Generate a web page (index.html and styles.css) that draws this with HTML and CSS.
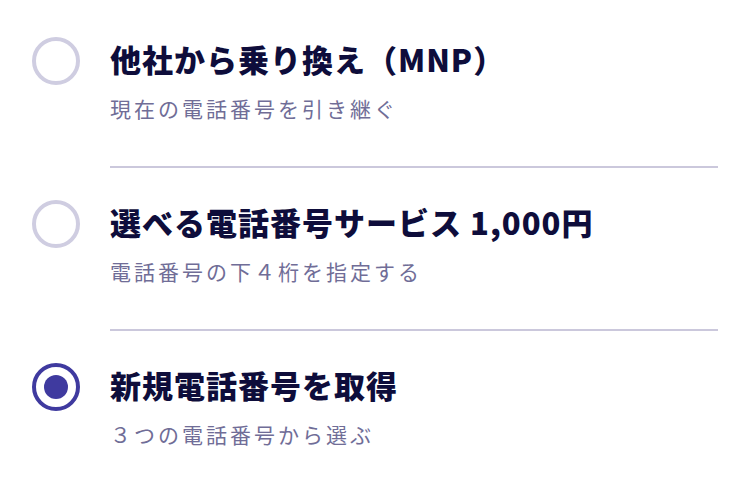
FILE: index.html
```html
<!DOCTYPE html>
<html lang="ja">
<head>
    <meta charset="UTF-8">
    <meta name="viewport" content="width=device-width, initial-scale=1.0">
    <title>電話番号の選択</title>
    <link rel="stylesheet" href="styles.css">
</head>
<body>
    <main class="choices">
        <label class="choice">
            <span class="radio"></span>
            <div class="choice-body">
                <div class="choice-title">他社から乗り換え（MNP）</div>
                <div class="choice-note">現在の電話番号を引き継ぐ</div>
            </div>
        </label>
        <label class="choice">
            <span class="radio"></span>
            <div class="choice-body">
                <div class="choice-title">選べる電話番号サービス 1,000円</div>
                <div class="choice-note">電話番号の下４桁を指定する</div>
            </div>
        </label>
        <label class="choice">
            <span class="radio checked"></span>
            <div class="choice-body">
                <div class="choice-title">新規電話番号を取得</div>
                <div class="choice-note">３つの電話番号から選ぶ</div>
            </div>
        </label>
    </main>
</body>
</html>
```

FILE: styles.css
```css
body {
    margin: 0;
    padding: 0;
    background-color: #fff;
    font-family: "Noto Sans CJK JP", "Noto Sans", sans-serif;
}

.choices {
    padding-top: 5px;
}

.choice {
    display: flex;
    align-items: flex-start;
    padding: 0 32px;
    cursor: pointer;
}

.radio {
    flex: none;
    width: 48px;
    height: 48px;
    margin-top: 32px;
    border: 4px solid #cfcde1;
    border-radius: 50%;
    box-sizing: border-box;
    display: flex;
    align-items: center;
    justify-content: center;
}

.radio.checked {
    border-color: #3f3a9f;
}

.radio.checked::after {
    content: "";
    width: 24px;
    height: 24px;
    border-radius: 50%;
    background-color: #3f3a9f;
}

.choice-body {
    flex: 1;
    margin-left: 30px;
    padding: 30px 0 43px;
    border-bottom: 2px solid #cbc8dc;
}

.choice:last-child .choice-body {
    border-bottom: none;
}

.choice-title {
    font-size: 31px;
    line-height: 48px;
    font-weight: 900;
    letter-spacing: 1px;
    color: #0e0d3b;
}

.choice-note {
    margin-top: 10px;
    font-size: 21px;
    line-height: 30px;
    letter-spacing: 3px;
    color: #706d97;
}
```
